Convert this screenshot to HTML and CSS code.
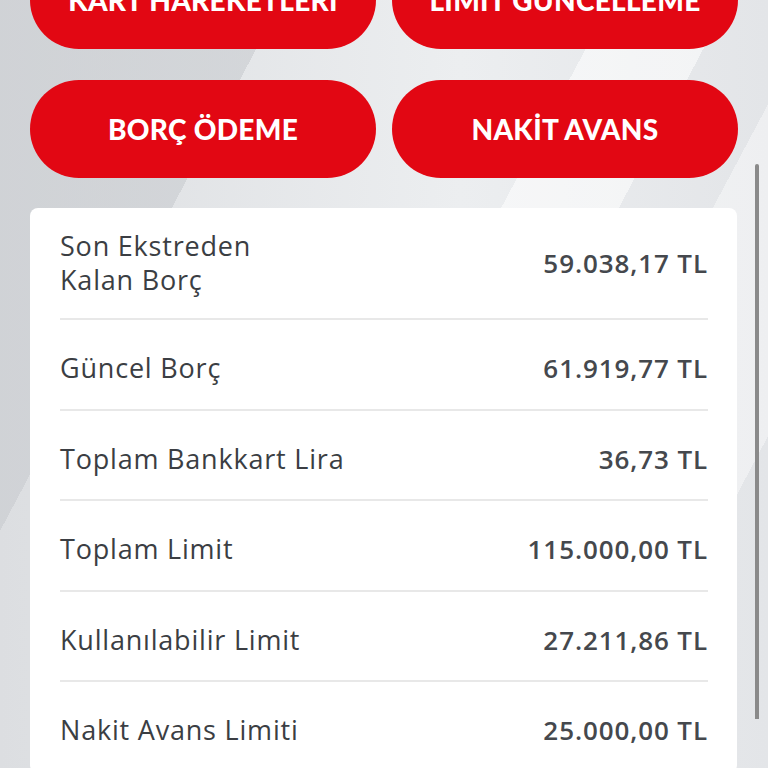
FILE: index.html
```html
<!DOCTYPE html>
<html lang="tr">
<head>
    <meta charset="UTF-8">
    <meta name="viewport" content="width=device-width, initial-scale=1.0">
    <title>Kart Detayı</title>
    <link rel="stylesheet" href="styles.css">
</head>
<body>
    <div class="screen">
        <div class="actions">
            <button class="action">KART HAREKETLERİ</button>
            <button class="action">LİMİT GÜNCELLEME</button>
            <button class="action">BORÇ ÖDEME</button>
            <button class="action">NAKİT AVANS</button>
        </div>

        <div class="card">
            <div class="row row-tall">
                <span class="label">Son Ekstreden<br>Kalan Borç</span>
                <span class="value">59.038,17 TL</span>
            </div>
            <div class="row">
                <span class="label">Güncel Borç</span>
                <span class="value">61.919,77 TL</span>
            </div>
            <div class="row">
                <span class="label">Toplam Bankkart Lira</span>
                <span class="value">36,73 TL</span>
            </div>
            <div class="row">
                <span class="label">Toplam Limit</span>
                <span class="value">115.000,00 TL</span>
            </div>
            <div class="row">
                <span class="label">Kullanılabilir Limit</span>
                <span class="value">27.211,86 TL</span>
            </div>
            <div class="row">
                <span class="label">Nakit Avans Limiti</span>
                <span class="value">25.000,00 TL</span>
            </div>
        </div>

        <div class="scroll-thumb"></div>
    </div>
</body>
</html>
```

FILE: styles.css
```css
html, body {
    margin: 0;
    height: 100%;
    overflow: hidden;
}
body {
    font-family: 'Open Sans', 'Noto Sans', sans-serif;
    background-color: #e4e6e8;
    background-image:
        linear-gradient(118deg, transparent 0 52%, rgba(255, 255, 255, 0.55) 52% 62%, transparent 62%),
        linear-gradient(118deg, rgba(200, 203, 207, 0.6) 0 24%, transparent 24% 70%, rgba(255, 255, 255, 0.4) 70% 85%, transparent 85%),
        linear-gradient(90deg, #dcdee1, #eceef0 60%, #e3e5e8);
}
.screen {
    position: relative;
    height: 100%;
}
.actions {
    display: grid;
    grid-template-columns: 1fr 1fr;
    column-gap: 16px;
    row-gap: 31px;
    padding: 0 30px;
    margin-top: -49px;
}
.action {
    height: 98px;
    border: none;
    border-radius: 49px;
    background: #e20713;
    color: #fff;
    font-family: 'Lato', sans-serif;
    font-weight: 900;
    font-size: 28px;
    letter-spacing: 0.3px;
    padding: 0;
}
.card {
    margin: 30px 31px 0 30px;
    padding: 0 29px 0 30px;
    background: #fff;
    border-radius: 8px;
}
.row {
    display: flex;
    align-items: center;
    justify-content: space-between;
    box-sizing: border-box;
    min-height: 90.5px;
    padding: 25px 0 17px;
    border-bottom: 2px solid #e8e8e8;
}
.row-tall {
    padding: 21px 0;
}
.label {
    font-size: 27px;
    line-height: 34px;
    letter-spacing: 0.8px;
    color: #3b3e43;
}
.value {
    font-size: 26px;
    font-weight: 600;
    letter-spacing: 0.9px;
    color: #45484d;
}
.scroll-thumb {
    position: absolute;
    left: 755px;
    top: 213px;
    bottom: 0;
    width: 4px;
    border-radius: 2px 2px 0 0;
    background: #8a8a8a;
}
```
